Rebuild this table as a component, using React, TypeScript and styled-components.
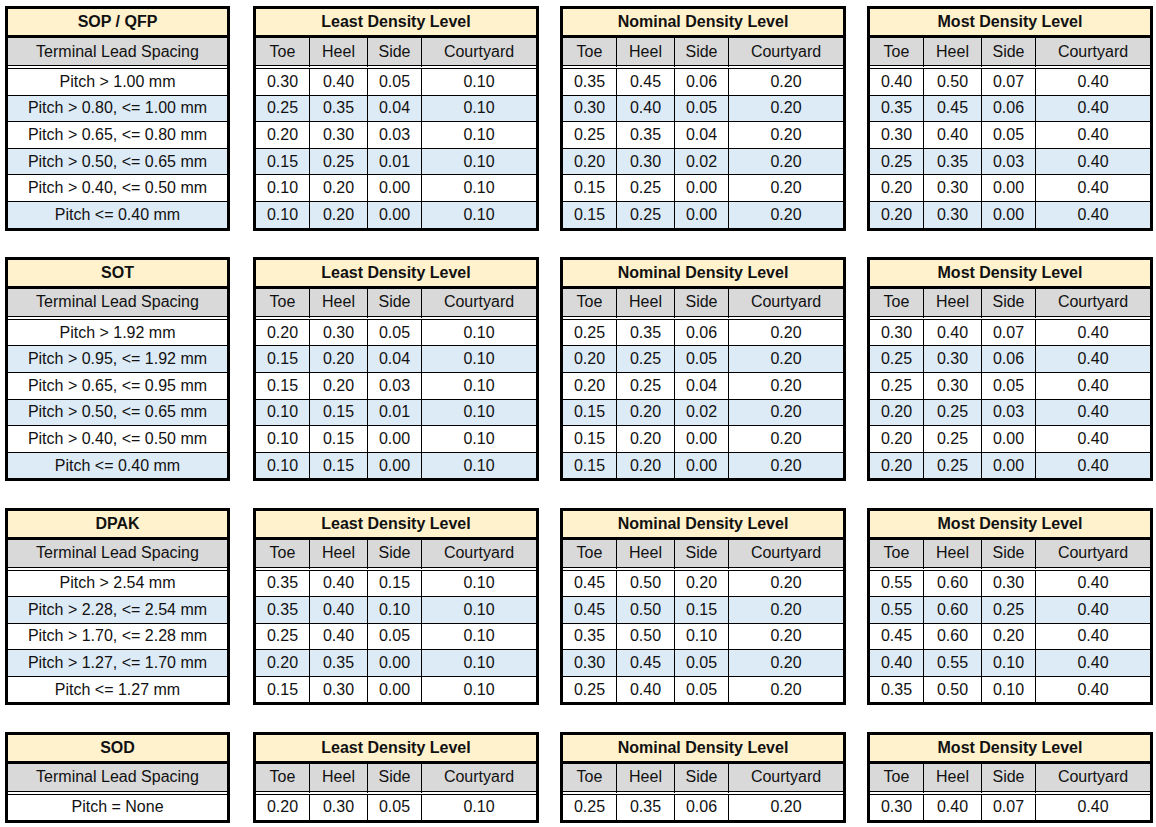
import React from "react";
import styled, { createGlobalStyle } from "styled-components";

const GlobalStyle = createGlobalStyle`
  html, body { margin: 0; padding: 0; background: #ffffff; }
  body { font-family: "Liberation Sans", Arial, sans-serif; color: #111; }
`;

const Page = styled.div`
  display: flex;
  flex-direction: column;
  gap: 26.2px;
  padding: 6px 0 0 5px;
`;

const Group = styled.div`
  display: flex;
  align-items: flex-start;
  gap: 21px;
`;

const Table = styled.div<{ $width: number; $cols: string; $first?: boolean }>`
  box-sizing: border-box;
  width: ${(p) => p.$width}px;
  margin-right: ${(p) => (p.$first ? 2 : 0)}px;
  border: 3px solid #000;
  background: #fff;
  display: grid;
  grid-template-columns: ${(p) => p.$cols};
`;

const Title = styled.div`
  grid-column: 1 / -1;
  height: 26px;
  box-sizing: content-box;
  background: #fff2cc;
  border-bottom: 3px solid #000;
  display: flex;
  align-items: center;
  justify-content: center;
  font-weight: 700;
  font-size: 16px;
`;

const Head = styled.div<{ $last?: boolean }>`
  height: 27px;
  box-sizing: content-box;
  background: #d9d9d9;
  background-clip: padding-box;
  border-bottom: 4px double #000;
  border-right: ${(p) => (p.$last ? "none" : "1px solid #000")};
  display: flex;
  align-items: center;
  justify-content: center;
  font-size: 16px;
`;

const Cell = styled.div<{ $alt?: boolean; $last?: boolean; $lastRow?: boolean }>`
  height: 25.6px;
  box-sizing: content-box;
  background: ${(p) => (p.$alt ? "#ddebf7" : "#ffffff")};
  border-bottom: ${(p) => (p.$lastRow ? "none" : "1px solid #000")};
  border-right: ${(p) => (p.$last ? "none" : "1px solid #000")};
  display: flex;
  align-items: center;
  justify-content: center;
  font-size: 16px;
  white-space: nowrap;
`;

type Row = [string, string, string, string];

interface GroupData {
  name: string;
  pitches: string[];
  least: Row[];
  nominal: Row[];
  most: Row[];
}

const groups: GroupData[] = [
  {
    name: "SOP / QFP",
    pitches: [
      "Pitch > 1.00 mm",
      "Pitch > 0.80, <= 1.00 mm",
      "Pitch > 0.65, <= 0.80 mm",
      "Pitch > 0.50, <= 0.65 mm",
      "Pitch > 0.40, <= 0.50 mm",
      "Pitch <= 0.40 mm",
    ],
    least: [
      ["0.30", "0.40", "0.05", "0.10"],
      ["0.25", "0.35", "0.04", "0.10"],
      ["0.20", "0.30", "0.03", "0.10"],
      ["0.15", "0.25", "0.01", "0.10"],
      ["0.10", "0.20", "0.00", "0.10"],
      ["0.10", "0.20", "0.00", "0.10"],
    ],
    nominal: [
      ["0.35", "0.45", "0.06", "0.20"],
      ["0.30", "0.40", "0.05", "0.20"],
      ["0.25", "0.35", "0.04", "0.20"],
      ["0.20", "0.30", "0.02", "0.20"],
      ["0.15", "0.25", "0.00", "0.20"],
      ["0.15", "0.25", "0.00", "0.20"],
    ],
    most: [
      ["0.40", "0.50", "0.07", "0.40"],
      ["0.35", "0.45", "0.06", "0.40"],
      ["0.30", "0.40", "0.05", "0.40"],
      ["0.25", "0.35", "0.03", "0.40"],
      ["0.20", "0.30", "0.00", "0.40"],
      ["0.20", "0.30", "0.00", "0.40"],
    ],
  },
  {
    name: "SOT",
    pitches: [
      "Pitch > 1.92 mm",
      "Pitch > 0.95, <= 1.92 mm",
      "Pitch > 0.65, <= 0.95 mm",
      "Pitch > 0.50, <= 0.65 mm",
      "Pitch > 0.40, <= 0.50 mm",
      "Pitch <= 0.40 mm",
    ],
    least: [
      ["0.20", "0.30", "0.05", "0.10"],
      ["0.15", "0.20", "0.04", "0.10"],
      ["0.15", "0.20", "0.03", "0.10"],
      ["0.10", "0.15", "0.01", "0.10"],
      ["0.10", "0.15", "0.00", "0.10"],
      ["0.10", "0.15", "0.00", "0.10"],
    ],
    nominal: [
      ["0.25", "0.35", "0.06", "0.20"],
      ["0.20", "0.25", "0.05", "0.20"],
      ["0.20", "0.25", "0.04", "0.20"],
      ["0.15", "0.20", "0.02", "0.20"],
      ["0.15", "0.20", "0.00", "0.20"],
      ["0.15", "0.20", "0.00", "0.20"],
    ],
    most: [
      ["0.30", "0.40", "0.07", "0.40"],
      ["0.25", "0.30", "0.06", "0.40"],
      ["0.25", "0.30", "0.05", "0.40"],
      ["0.20", "0.25", "0.03", "0.40"],
      ["0.20", "0.25", "0.00", "0.40"],
      ["0.20", "0.25", "0.00", "0.40"],
    ],
  },
  {
    name: "DPAK",
    pitches: [
      "Pitch > 2.54 mm",
      "Pitch > 2.28, <= 2.54 mm",
      "Pitch > 1.70, <= 2.28 mm",
      "Pitch > 1.27, <= 1.70 mm",
      "Pitch <= 1.27 mm",
    ],
    least: [
      ["0.35", "0.40", "0.15", "0.10"],
      ["0.35", "0.40", "0.10", "0.10"],
      ["0.25", "0.40", "0.05", "0.10"],
      ["0.20", "0.35", "0.00", "0.10"],
      ["0.15", "0.30", "0.00", "0.10"],
    ],
    nominal: [
      ["0.45", "0.50", "0.20", "0.20"],
      ["0.45", "0.50", "0.15", "0.20"],
      ["0.35", "0.50", "0.10", "0.20"],
      ["0.30", "0.45", "0.05", "0.20"],
      ["0.25", "0.40", "0.05", "0.20"],
    ],
    most: [
      ["0.55", "0.60", "0.30", "0.40"],
      ["0.55", "0.60", "0.25", "0.40"],
      ["0.45", "0.60", "0.20", "0.40"],
      ["0.40", "0.55", "0.10", "0.40"],
      ["0.35", "0.50", "0.10", "0.40"],
    ],
  },
  {
    name: "SOD",
    pitches: ["Pitch = None"],
    least: [["0.20", "0.30", "0.05", "0.10"]],
    nominal: [["0.25", "0.35", "0.06", "0.20"]],
    most: [["0.30", "0.40", "0.07", "0.40"]],
  },
];

const headers = ["Toe", "Heel", "Side", "Courtyard"];
const DATA_COLS = "54px 58px 54px 1fr";

const PitchTable: React.FC<{ name: string; pitches: string[] }> = ({ name, pitches }) => (
  <Table $width={225} $cols="1fr" $first>
    <Title>{name}</Title>
    <Head $last>Terminal Lead Spacing</Head>
    {pitches.map((p, i) => (
      <Cell key={i} $alt={i % 2 === 1} $last $lastRow={i === pitches.length - 1}>
        {p}
      </Cell>
    ))}
  </Table>
);

const DensityTable: React.FC<{ title: string; rows: Row[] }> = ({ title, rows }) => (
  <Table $width={286} $cols={DATA_COLS}>
    <Title>{title}</Title>
    {headers.map((h, i) => (
      <Head key={h} $last={i === 3}>
        {h}
      </Head>
    ))}
    {rows.map((r, ri) =>
      r.map((v, ci) => (
        <Cell
          key={`${ri}-${ci}`}
          $alt={ri % 2 === 1}
          $last={ci === 3}
          $lastRow={ri === rows.length - 1}
        >
          {v}
        </Cell>
      ))
    )}
  </Table>
);

export default function App() {
  return (
    <>
      <GlobalStyle />
      <Page>
        {groups.map((g) => (
          <Group key={g.name}>
            <PitchTable name={g.name} pitches={g.pitches} />
            <DensityTable title="Least Density Level" rows={g.least} />
            <DensityTable title="Nominal Density Level" rows={g.nominal} />
            <DensityTable title="Most Density Level" rows={g.most} />
          </Group>
        ))}
      </Page>
    </>
  );
}
